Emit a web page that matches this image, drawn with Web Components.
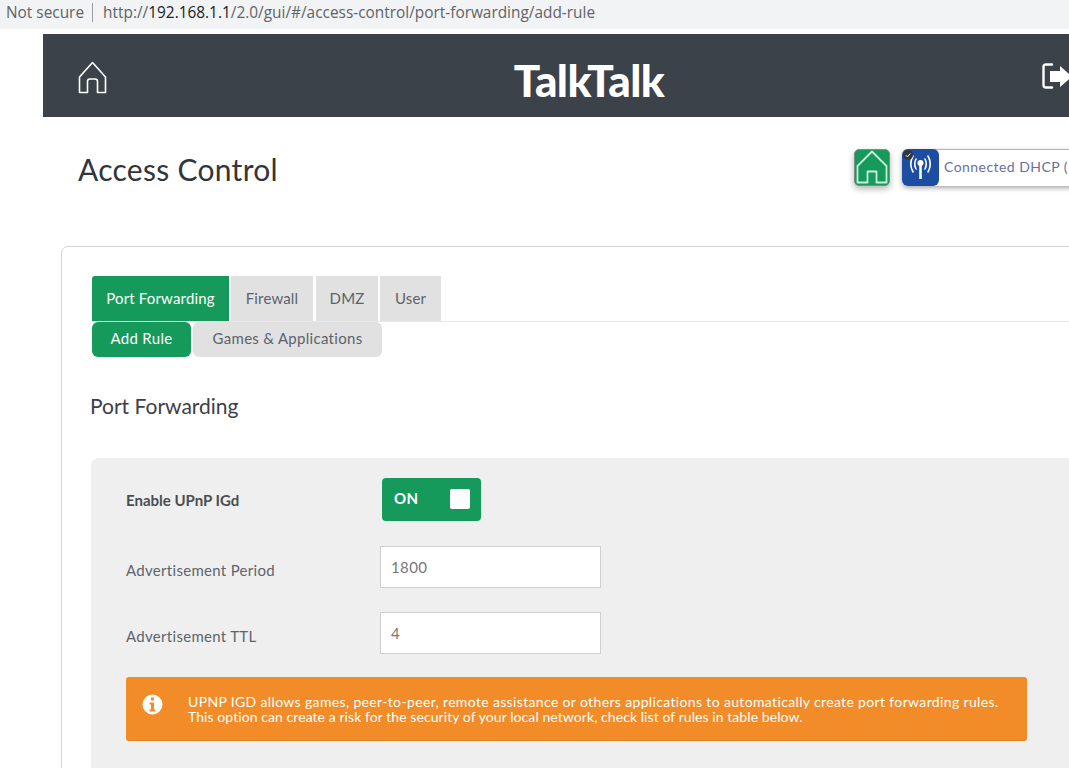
<!DOCTYPE html>
<html>
<head>
<meta charset="utf-8">
<title>Access Control</title>
<style>
    html, body {
        margin: 0;
        background: #fff;
        width: 1069px;
        height: 768px;
        overflow: hidden;
        font-family: Lato, "Open Sans", sans-serif;
    }
</style>
</head>
<body>
<tt-browser-bar url="http://192.168.1.1/2.0/gui/#/access-control/port-forwarding/add-rule"></tt-browser-bar>
<tt-page>
    <tt-header></tt-header>
    <tt-title-row>Access Control</tt-title-row>
    <tt-card>
        <tt-tabs items="Port Forwarding|Firewall|DMZ|User"></tt-tabs>
        <tt-subtabs items="Add Rule|Games &amp; Applications"></tt-subtabs>
        <tt-section-title>Port Forwarding</tt-section-title>
        <tt-panel>
            <tt-row label="Enable UPnP IGd" strong><tt-toggle></tt-toggle></tt-row>
            <tt-row label="Advertisement Period"><tt-field>1800</tt-field></tt-row>
            <tt-row label="Advertisement TTL" last><tt-field>4</tt-field></tt-row>
            <tt-alert>
                <span style="letter-spacing:.35px">UPNP IGD allows games, peer-to-peer, remote assistance or others applications to automatically create port forwarding rules.</span><br>
                <span style="letter-spacing:.07px">This option can create a risk for the security of your local network, check list of rules in table below.</span>
            </tt-alert>
        </tt-panel>
    </tt-card>
</tt-page>

<script>
class BrowserBar extends HTMLElement {
    constructor() {
        super();
        this.attachShadow({ mode: 'open' });
        const url = this.getAttribute('url');
        const host = '192.168.1.1';
        const [before, after] = url.split(host);
        this.shadowRoot.innerHTML = `
            <style>
                :host {
                    display: flex;
                    align-items: center;
                    height: 29px;
                    padding-bottom: 4px;
                    margin-bottom: 5px;
                    box-sizing: border-box;
                    background: #f1f3f4;
                    font: 15.400px "Open Sans", sans-serif;
                    color: #5f6368;
                    white-space: nowrap;
                }
                #state { margin-left: 6px; }
                #sep {
                    width: 1px;
                    height: 19px;
                    margin: 0 10px 0 8px;
                    background: #9a9da0;
                }
                b { font-weight: 400; color: #202124; }
            </style>
            <span id="state">Not secure</span><span id="sep"></span>
            <span>${before}<b>${host}</b>${after}</span>
        `;
    }
}

class Page extends HTMLElement {
    constructor() {
        super();
        this.attachShadow({ mode: 'open' });
        this.shadowRoot.innerHTML = `
            <style>
                :host {
                    display: block;
                    width: 1092px;
                    margin-left: 43px;
                }
            </style>
            <slot></slot>
        `;
    }
}

class Header extends HTMLElement {
    constructor() {
        super();
        this.attachShadow({ mode: 'open' });
        this.shadowRoot.innerHTML = `
            <style>
                :host {
                    display: grid;
                    grid-template-columns: 1fr auto 1fr;
                    align-items: center;
                    height: 83px;
                    background: #3b4249;
                    box-sizing: border-box;
                }
                #logo {
                    font: 900 44px/73px Lato, sans-serif;
                    letter-spacing: -0.6px;
                    color: #fff;
                    padding-top: 10px;
                }
                #logout { justify-self: end; margin-right: 62px; display: block; }
                #home { display: block; margin: 3px 0 0 35px; }
            </style>
            <svg id="home" width="29" height="33" viewBox="0 0 29 33" fill="none" stroke="#fff" stroke-width="1.6" stroke-linejoin="round">
                <path d="M14.500 1.500 L27.500 16 V31.500 H19.500 V20.500 Q19.500 18 17 18 H12 Q9.500 18 9.500 20.500 V31.500 H1.500 V16 Z"/>
            </svg>
            <div id="logo">TalkTalk</div>
            <svg id="logout" width="31" height="26" viewBox="0 0 31 26">
                <path d="M10 1.500 H4 Q1.500 1.500 1.500 4 V22 Q1.500 24.500 4 24.500 H10" fill="none" stroke="#fff" stroke-width="2.400" stroke-linecap="round"/>
                <path d="M8 8 H18 V3 L30 13.500 L18 24 V19 H8 Z" fill="#fff"/>
            </svg>
        `;
    }
}

class TitleRow extends HTMLElement {
    constructor() {
        super();
        this.attachShadow({ mode: 'open' });
        this.shadowRoot.innerHTML = `
            <style>
                :host {
                    display: flex;
                    align-items: flex-start;
                    height: 129px;
                    padding-left: 35px;
                    color: #30363c;
                }
                h1 {
                    margin: 32px 0 0;
                    font: 400 30px/40px Lato, sans-serif;
                    letter-spacing: .28px;
                    flex: 0 0 776px;
                }
                #home {
                    flex: none;
                    width: 36px;
                    height: 37px;
                    margin-top: 32px;
                    background: #159a5c;
                    border: 1px solid #7c8f86;
                    border-radius: 5px;
                    box-sizing: border-box;
                    box-shadow: 0 3px 6px rgba(0,0,0,.3);
                }
                #home svg { display: block; margin: 0; }
                #status {
                    display: flex;
                    align-items: center;
                    flex: none;
                    width: 260px;
                    height: 37px;
                    margin: 32px 0 0 12px;
                    background: #fff;
                    border-top: 1px solid #b5b5b5;
                    border-radius: 6px;
                    box-sizing: border-box;
                    box-shadow: 0 2px 5px rgba(0,0,0,.35);
                    position: relative;
                    font: 14px Lato, sans-serif;
                    letter-spacing: .45px;
                    color: #6a6fa0;
                    white-space: nowrap;
                }
                #status > span:last-child { margin-top: -4px; }
                #wifi {
                    flex: none;
                    width: 37px;
                    height: 37px;
                    margin: -1px 5px 0 0;
                    background: #1c4da3;
                    border-radius: 6px;
                }
                #wifi svg { display: block; }
                #check {
                    position: absolute;
                    left: 1px;
                    top: 0;
                    width: 10px;
                    height: 10px;
                    border-radius: 50%;
                    background: #30363c;
                }
            </style>
            <h1><slot></slot></h1>
            <div id="home">
                <svg width="34" height="35" viewBox="0 0 34 35" fill="none" stroke="#c9ecd9" stroke-width="1.800" stroke-linejoin="round">
                    <path d="M17 1.500 L31.500 16 V32.500 H21.500 V21.500 H12.500 V32.500 H2.500 V16 Z"/>
                </svg>
            </div>
            <div id="status">
                <div id="wifi">
                    <svg width="37" height="37" viewBox="0 0 37 37" fill="none" stroke="#fff" stroke-width="1.600" stroke-linecap="round">
                        <path d="M11 7 Q6.500 15 11 23 M14 10 Q11.500 15 14 20 M26 7 Q30.500 15 26 23 M23 10 Q25.500 15 23 20"/>
                        <circle cx="18.500" cy="14" r="3" fill="#fff" stroke="none"/>
                        <path d="M18.500 15 V30" stroke-width="2.600" stroke-linecap="butt"/>
                    </svg>
                </div>
                <span id="check">
                    <svg width="10" height="10" viewBox="0 0 10 10" fill="none" stroke="#fff" stroke-width="1" style="display:block"><path d="M2.800 5.200 L4.400 6.800 L7.400 3.500"/></svg>
                </span>
                <span>Connected DHCP (</span>
            </div>
        `;
    }
}

class Card extends HTMLElement {
    constructor() {
        super();
        this.attachShadow({ mode: 'open' });
        this.shadowRoot.innerHTML = `
            <style>
                :host {
                    display: block;
                    margin-left: 18px;
                    height: 700px;
                    padding: 29px 0 0 30px;
                    background: #fff;
                    border: 1px solid #d4d4d4;
                    border-radius: 7px;
                    box-sizing: border-box;
                }
            </style>
            <slot></slot>
        `;
    }
}

class Tabs extends HTMLElement {
    constructor() {
        super();
        this.attachShadow({ mode: 'open' });
        const items = this.getAttribute('items').split('|');
        this.shadowRoot.innerHTML = `
            <style>
                :host {
                    display: flex;
                    height: 46px;
                    border-bottom: 1px solid #e8e8e8;
                    box-sizing: border-box;
                    font: 15px Lato, sans-serif;
                    letter-spacing: .15px;
                    color: #5c636b;
                }
                span {
                    display: flex;
                    align-items: center;
                    justify-content: center;
                    height: 43px;
                    padding-bottom: 2px;
                    background: #e1e1e1;
                }
                span:nth-of-type(1) {
                    width: 137px;
                    margin-right: 2px;
                    background: #159a5c;
                    color: #fff;
                    border-radius: 3px 0 0 0;
                }
                span:nth-of-type(2) { width: 82px; margin-right: 3px; }
                span:nth-of-type(3) { width: 62px; margin-right: 2px; }
                span:nth-of-type(4) { width: 61px; }
            </style>
            ${items.map(i => `<span>${i}</span>`).join('')}
        `;
    }
}

class SubTabs extends HTMLElement {
    constructor() {
        super();
        this.attachShadow({ mode: 'open' });
        const items = this.getAttribute('items').split('|');
        this.shadowRoot.innerHTML = `
            <style>
                :host {
                    display: flex;
                    gap: 2px;
                    font: 15px Lato, sans-serif;
                    letter-spacing: .3px;
                    color: #5c636b;
                }
                span {
                    display: flex;
                    align-items: center;
                    justify-content: center;
                    height: 31px;
                    padding-bottom: 4px;
                    background: #e1e1e1;
                    border-radius: 6px;
                }
                span:nth-of-type(1) {
                    width: 99px;
                    background: #159a5c;
                    color: #fff;
                }
                span:nth-of-type(2) { width: 189px; }
            </style>
            ${items.map(i => `<span>${i.replace('&', '&amp;')}</span>`).join('')}
        `;
    }
}

class SectionTitle extends HTMLElement {
    constructor() {
        super();
        this.attachShadow({ mode: 'open' });
        this.shadowRoot.innerHTML = `
            <style>
                :host {
                    display: block;
                    height: 101px;
                    padding-top: 35px;
                    box-sizing: border-box;
                    margin-left: -2px;
                    font: 21px/28px Lato, sans-serif;
                    color: #3d4046;
                }
            </style>
            <slot></slot>
        `;
    }
}

class Panel extends HTMLElement {
    constructor() {
        super();
        this.attachShadow({ mode: 'open' });
        this.shadowRoot.innerHTML = `
            <style>
                :host {
                    display: block;
                    height: 400px;
                    margin-left: -1px;
                    padding: 20px 0 0 35px;
                    background: #efefef;
                    border-radius: 8px 0 0 0;
                    box-sizing: border-box;
                }
            </style>
            <slot></slot>
        `;
    }
}

class Row extends HTMLElement {
    constructor() {
        super();
        this.attachShadow({ mode: 'open' });
        this.shadowRoot.innerHTML = `
            <style>
                :host {
                    display: flex;
                    align-items: center;
                    margin-bottom: 24px;
                    font: 15px Lato, sans-serif;
                    letter-spacing: .3px;
                    color: #5d646b;
                }
                :host([last]) { margin-bottom: 23px; }
                :host([strong]) {
                    margin-bottom: 25px;
                    color: #484e54;
                    font-weight: 700;
                    letter-spacing: 0;
                }
                #label { flex: 0 0 254px; padding-top: 6px; }
                :host([strong]) #label { padding-top: 0; }
            </style>
            <div id="label">${this.getAttribute('label')}</div>
            <slot></slot>
        `;
    }
}

class Toggle extends HTMLElement {
    constructor() {
        super();
        this.attachShadow({ mode: 'open' });
        this.shadowRoot.innerHTML = `
            <style>
                :host {
                    display: flex;
                    align-items: center;
                    justify-content: space-between;
                    width: 99px;
                    height: 43px;
                    margin-left: 2px;
                    padding: 0 11px 2px 12px;
                    background: #159a5c;
                    border-radius: 4px;
                    box-sizing: border-box;
                    font: 700 15px Lato, sans-serif;
                    letter-spacing: .5px;
                    color: #fff;
                }
                span { margin-top: -2px; }
                i {
                    width: 20px;
                    height: 20px;
                    background: #fff;
                    border-radius: 2px;
                }
            </style>
            <span>ON</span><i></i>
        `;
    }
}

class Field extends HTMLElement {
    constructor() {
        super();
        this.attachShadow({ mode: 'open' });
        this.shadowRoot.innerHTML = `
            <style>
                :host {
                    display: flex;
                    align-items: center;
                    width: 221px;
                    height: 42px;
                    padding: 0 10px;
                    background: #fff;
                    border: 1px solid #cfcfcf;
                    box-sizing: border-box;
                    font: 15px Lato, sans-serif;
                    letter-spacing: .4px;
                    color: #777;
                }
            </style>
            <slot></slot>
        `;
    }
}

class Alert extends HTMLElement {
    constructor() {
        super();
        this.attachShadow({ mode: 'open' });
        this.shadowRoot.innerHTML = `
            <style>
                :host {
                    display: flex;
                    align-items: flex-start;
                    width: 901px;
                    height: 64px;
                    padding: 17px 0 0 16px;
                    background: #f28c28;
                    border-bottom: 1px solid #e38226;
                    border-radius: 3px;
                    box-sizing: border-box;
                    font: 14px/15px Lato, sans-serif;
                    color: #fff;
                    white-space: nowrap;
                }
                svg { flex: none; display: block; margin: 0 25px 0 0; }
            </style>
            <svg width="21" height="21" viewBox="0 0 21 21">
                <path fill="#fff" fill-rule="evenodd" d="M10.500 .500a10 10 0 1 0 0 20 10 10 0 0 0 0-20zM9 3.500h3v3H9zM7.500 8.500H12v7h1.500v2h-6v-2H9v-5H7.500z"/>
            </svg>
            <div><slot></slot></div>
        `;
    }
}

customElements.define('tt-browser-bar', BrowserBar);
customElements.define('tt-page', Page);
customElements.define('tt-header', Header);
customElements.define('tt-title-row', TitleRow);
customElements.define('tt-card', Card);
customElements.define('tt-tabs', Tabs);
customElements.define('tt-subtabs', SubTabs);
customElements.define('tt-section-title', SectionTitle);
customElements.define('tt-panel', Panel);
customElements.define('tt-row', Row);
customElements.define('tt-toggle', Toggle);
customElements.define('tt-field', Field);
customElements.define('tt-alert', Alert);
</script>
</body>
</html>
